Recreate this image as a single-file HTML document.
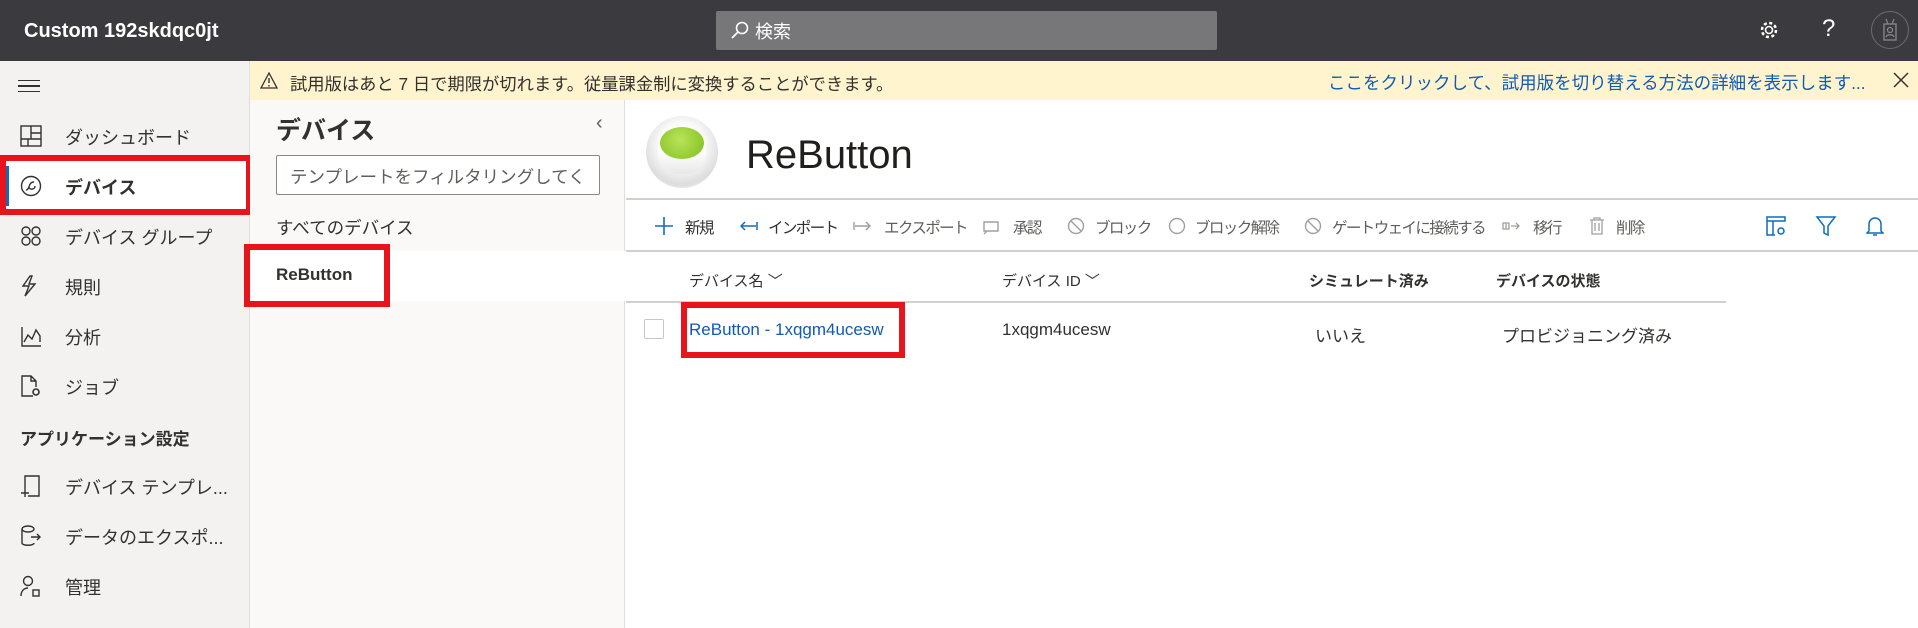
<!DOCTYPE html>
<html><head><meta charset="utf-8"><style>
*{margin:0;padding:0;box-sizing:border-box}
body{width:1918px;height:628px;overflow:hidden;background:#fff;font-family:"Liberation Sans","Noto Sans CJK JP",sans-serif;color:#323130;position:relative}
.a{position:absolute;white-space:nowrap}
.hdr{left:0;top:0;width:1918px;height:61px;background:#3b3a3f}
.nav{left:0;top:61px;width:250px;height:567px;background:#f3f2f1;border-right:1px solid #e1dfdd}
.p2{left:250px;top:100px;width:375px;height:528px;background:#faf9f8;border-right:1px solid #e1dfdd}
.ban{left:250px;top:61px;width:1668px;height:39px;background:#fff4ce}
.nt{font-size:18px;left:65px}
.ni{left:20px;width:22px;height:22px}
.red{position:absolute;border:6px solid #e8141c}
.tb{font-size:15.5px;letter-spacing:-1.6px;color:#605e5c;top:216px}
.ti{top:217px;width:18px;height:18px}
.th{font-size:15px;top:270px;color:#323130}
</style></head><body>
<div class="a hdr"></div>
<div class="a" style="left:24px;top:20px;color:#fff;font-size:20px;font-weight:bold">Custom 192skdqc0jt</div>
<div class="a" style="left:716px;top:11px;width:501px;height:39px;background:#777678;border-radius:2px"></div>
<svg class="a" style="left:730px;top:20px" width="20" height="20" viewBox="0 0 20 20"><circle cx="12" cy="8" r="5.5" fill="none" stroke="#fff" stroke-width="1.6"/><line x1="8" y1="12" x2="2" y2="18" stroke="#fff" stroke-width="1.8"/></svg>
<div class="a" style="left:755px;top:18px;color:#fff;font-size:18px">検索</div>
<svg class="a" style="left:1758px;top:19px" width="22" height="22" viewBox="0 0 22 22"><circle cx="11" cy="11" r="3.5" fill="none" stroke="#fff" stroke-width="1.6"/><circle cx="11" cy="11" r="7" fill="none" stroke="#fff" stroke-width="2.5" stroke-dasharray="3 2.5"/></svg>
<div class="a" style="left:1822px;top:15px;color:#fff;font-size:24px">?</div>
<div class="a" style="left:1871px;top:11px;width:38px;height:38px;border:1.5px solid #6c6b6f;border-radius:50%"></div>
<svg class="a" style="left:1882px;top:18px" width="16" height="24" viewBox="0 0 16 24"><rect x="2" y="6" width="12" height="16" fill="none" stroke="#8a898c" stroke-width="1.3"/><circle cx="8" cy="12" r="2.5" fill="none" stroke="#8a898c" stroke-width="1.2"/><path d="M4 19c1-3 7-3 8 0M6 6L4 1M10 6l2-5" stroke="#8a898c" fill="none" stroke-width="1.2"/></svg>

<div class="a nav"></div>
<div class="a" style="left:18px;top:80px;width:22px;height:12px;border-top:1.5px solid #323130;border-bottom:1.5px solid #323130"></div>
<div class="a" style="left:18px;top:85px;width:22px;height:1.5px;background:#323130"></div>
<div class="a" style="left:0;top:160px;width:250px;height:52px;background:#fff"></div>
<div class="a" style="left:6px;top:166px;width:3px;height:40px;background:#0f6cbd"></div>
<svg class="a ni" style="top:125px" viewBox="0 0 22 22"><rect x="1" y="1" width="20" height="20" fill="none" stroke="#323130" stroke-width="1.4"/><path d="M11 1v13M1 14h20M11 8h10M8 14v7" stroke="#323130" stroke-width="1.4"/></svg>
<div class="a nt" style="top:124px">ダッシュボード</div>
<svg class="a ni" style="top:175px" viewBox="0 0 22 22"><circle cx="11" cy="11" r="9.5" fill="none" stroke="#323130" stroke-width="1.4"/><path d="M6 15c4 0 2-8 8-8M9 12c0 3 6 3 6-1" fill="none" stroke="#323130" stroke-width="1.4"/></svg>
<div class="a nt" style="top:174px;font-weight:bold">デバイス</div>
<svg class="a ni" style="top:225px" viewBox="0 0 22 22"><g fill="none" stroke="#323130" stroke-width="1.4"><circle cx="6" cy="6" r="4"/><circle cx="16" cy="6" r="4"/><circle cx="6" cy="16" r="4"/><circle cx="16" cy="16" r="4"/></g></svg>
<div class="a nt" style="top:224px">デバイス グループ</div>
<svg class="a ni" style="top:275px" viewBox="0 0 22 22"><path d="M10 1L3 11h6l-4 10 10-12h-6l3-8z" fill="none" stroke="#323130" stroke-width="1.4"/></svg>
<div class="a nt" style="top:274px">規則</div>
<svg class="a ni" style="top:325px" viewBox="0 0 22 22"><path d="M2 2v19h19M4 17l4-7 4 4 4-9 4 6v6" fill="none" stroke="#323130" stroke-width="1.4"/></svg>
<div class="a nt" style="top:324px">分析</div>
<svg class="a ni" style="top:375px" viewBox="0 0 22 22"><path d="M13 21H2V1h9l5 5v6M11 1v5h5" fill="none" stroke="#323130" stroke-width="1.4"/><circle cx="16" cy="17" r="3" fill="none" stroke="#323130" stroke-width="1.6"/></svg>
<div class="a nt" style="top:374px">ジョブ</div>
<div class="a" style="left:20px;top:425px;font-size:17px;font-weight:bold">アプリケーション設定</div>
<svg class="a ni" style="top:475px" viewBox="0 0 22 22"><path d="M5 14V1h14v20H8M1 18h8M5 14v8" fill="none" stroke="#323130" stroke-width="1.4"/></svg>
<div class="a nt" style="top:474px">デバイス テンプレ...</div>
<svg class="a ni" style="top:525px" viewBox="0 0 22 22"><ellipse cx="8" cy="4" rx="6" ry="3" fill="none" stroke="#323130" stroke-width="1.4"/><path d="M2 4v14c0 3 12 3 12 0M11 12h9M17 9l3 3-3 3" fill="none" stroke="#323130" stroke-width="1.4"/></svg>
<div class="a nt" style="top:524px">データのエクスポ...</div>
<svg class="a ni" style="top:575px" viewBox="0 0 22 22"><circle cx="8" cy="6" r="4.5" fill="none" stroke="#323130" stroke-width="1.4"/><path d="M1 21c0-6 4-8 7-8" fill="none" stroke="#323130" stroke-width="1.4"/><rect x="13" y="15" width="6" height="6" fill="none" stroke="#323130" stroke-width="1.4"/></svg>
<div class="a nt" style="top:574px">管理</div>
<div class="red" style="left:0;top:155px;width:252px;height:60px"></div>

<div class="a ban"></div>
<svg class="a" style="left:260px;top:72px" width="18" height="17" viewBox="0 0 18 17"><path d="M9 1L1 16h16z" fill="none" stroke="#323130" stroke-width="1.3"/><path d="M9 6v5M9 13v1.5" stroke="#323130" stroke-width="1.4"/></svg>
<div class="a" style="left:290px;top:70px;font-size:17.3px">試用版はあと 7 日で期限が切れます。従量課金制に変換することができます。</div>
<div class="a" style="left:1328px;top:70px;font-size:17.5px;color:#0f5bb5">ここをクリックして、試用版を切り替える方法の詳細を表示します...</div>
<svg class="a" style="left:1893px;top:72px" width="16" height="16" viewBox="0 0 16 16"><path d="M1 1l14 14M15 1L1 15" stroke="#323130" stroke-width="1.5"/></svg>

<div class="a p2"></div>
<div class="a" style="left:276px;top:111px;font-size:25px;font-weight:bold">デバイス</div>
<div class="a" style="left:596px;top:112px;font-size:20px;color:#605e5c">‹</div>
<div class="a" style="left:276px;top:155px;width:324px;height:40px;background:#fff;border:1px solid #8a8886;border-radius:2px"></div>
<div class="a" style="left:290px;top:164px;font-size:17.5px;color:#605e5c">テンプレートをフィルタリングしてく</div>
<div class="a" style="left:276px;top:215px;font-size:17.5px">すべてのデバイス</div>
<div class="a" style="left:251px;top:251px;width:374px;height:50px;background:#fff"></div>
<div class="a" style="left:276px;top:265px;font-size:17px;font-weight:bold">ReButton</div>
<div class="red" style="left:244px;top:244px;width:146px;height:63px"></div>

<div class="a" style="left:646px;top:116px;width:72px;height:72px;border-radius:50%;background:radial-gradient(circle at 50% 40%,#fafafa 40%,#ddd 70%,#fff 100%)"></div>
<div class="a" style="left:658px;top:126px;width:48px;height:48px;border-radius:40%;background:linear-gradient(#fff 50%,#e8e8e8)"></div>
<div class="a" style="left:660px;top:127px;width:44px;height:32px;border-radius:50%;background:radial-gradient(circle at 45% 40%,#b9e35a,#7fbf1c)"></div>
<div class="a" style="left:746px;top:133px;font-size:40px;color:#201f1e">ReButton</div>
<div class="a" style="left:626px;top:198px;width:1292px;height:2px;background:#d2d0ce"></div>
<div class="a" style="left:626px;top:250px;width:1292px;height:2px;background:#d2d0ce"></div>
<svg class="a ti" style="left:655px" viewBox="0 0 18 18"><path d="M9 0v18M0 9h18" stroke="#0f6cbd" stroke-width="1.6"/></svg>
<div class="a tb" style="left:685px;color:#323130">新規</div>
<svg class="a ti" style="left:740px" viewBox="0 0 18 18"><path d="M1 9h15M5 5L1 9l4 4M17 5v8" fill="none" stroke="#0f6cbd" stroke-width="1.5"/></svg>
<div class="a tb" style="left:768px;color:#323130">インポート</div>
<svg class="a ti" style="left:853px" viewBox="0 0 18 18"><path d="M1 5v8M2 9h15M13 5l4 4-4 4" fill="none" stroke="#a19f9d" stroke-width="1.4"/></svg>
<div class="a tb" style="left:884px">エクスポート</div>
<svg class="a ti" style="left:982px" viewBox="0 0 18 18"><path d="M2 14V5h14v9zM5 14l-3 3" fill="none" stroke="#a19f9d" stroke-width="1.4"/></svg>
<div class="a tb" style="left:1013px">承認</div>
<svg class="a ti" style="left:1067px" viewBox="0 0 18 18"><circle cx="9" cy="9" r="7.5" fill="none" stroke="#a19f9d" stroke-width="1.4"/><path d="M4 4l10 10" stroke="#a19f9d" stroke-width="1.4"/></svg>
<div class="a tb" style="left:1095px">ブロック</div>
<svg class="a ti" style="left:1168px" viewBox="0 0 18 18"><circle cx="9" cy="9" r="7.5" fill="none" stroke="#a19f9d" stroke-width="1.4"/></svg>
<div class="a tb" style="left:1195px">ブロック解除</div>
<svg class="a ti" style="left:1304px" viewBox="0 0 18 18"><circle cx="9" cy="9" r="7.5" fill="none" stroke="#a19f9d" stroke-width="1.4"/><path d="M4 4l10 10" stroke="#a19f9d" stroke-width="1.4"/></svg>
<div class="a tb" style="left:1332px">ゲートウェイに接続する</div>
<svg class="a ti" style="left:1502px" viewBox="0 0 18 18"><path d="M1 6h6v6H1zM4 6v6M9 9h8M14 6l3 3-3 3" fill="none" stroke="#a19f9d" stroke-width="1.3"/></svg>
<div class="a tb" style="left:1533px">移行</div>
<svg class="a ti" style="left:1588px" viewBox="0 0 18 18"><path d="M2 3h14M6 3V1h6v2M4 3v14h10V3M7 6v8M11 6v8" fill="none" stroke="#a19f9d" stroke-width="1.3"/></svg>
<div class="a tb" style="left:1616px">削除</div>
<svg class="a" style="left:1765px;top:215px" width="22" height="22" viewBox="0 0 22 22"><path d="M2 2h18v4H2zM2 6v14h8M8 6v14" fill="none" stroke="#0f6cbd" stroke-width="1.5"/><circle cx="16" cy="16" r="3" fill="none" stroke="#0f6cbd" stroke-width="1.5"/></svg>
<svg class="a" style="left:1815px;top:215px" width="22" height="22" viewBox="0 0 22 22"><path d="M2 2h18l-7 9v9l-4-2v-7z" fill="none" stroke="#0f6cbd" stroke-width="1.5"/></svg>
<svg class="a" style="left:1866px;top:215px" width="18" height="22" viewBox="0 0 18 22"><path d="M3 16V9a6 6 0 0 1 12 0v7l2 2H1zM7 20h4" fill="none" stroke="#0f6cbd" stroke-width="1.5"/></svg>

<div class="a th" style="left:689px">デバイス名 ﹀</div>
<div class="a th" style="left:1002px">デバイス ID ﹀</div>
<div class="a th" style="left:1309px;font-weight:bold">シミュレート済み</div>
<div class="a th" style="left:1496px;font-weight:bold">デバイスの状態</div>
<div class="a" style="left:626px;top:301px;width:1100px;height:1.5px;background:#d2d0ce"></div>
<div class="a" style="left:644px;top:319px;width:20px;height:20px;border:1px solid #c8c6c4;border-radius:2px"></div>
<div class="a" style="left:689px;top:320px;font-size:17px;color:#0f5bb5">ReButton - 1xqgm4ucesw</div>
<div class="a" style="left:1002px;top:320px;font-size:17px">1xqgm4ucesw</div>
<div class="a" style="left:1315px;top:322px;font-size:17px">いいえ</div>
<div class="a" style="left:1502px;top:322px;font-size:17px">プロビジョニング済み</div>
<div class="red" style="left:681px;top:302px;width:224px;height:56px"></div>
</body></html>
